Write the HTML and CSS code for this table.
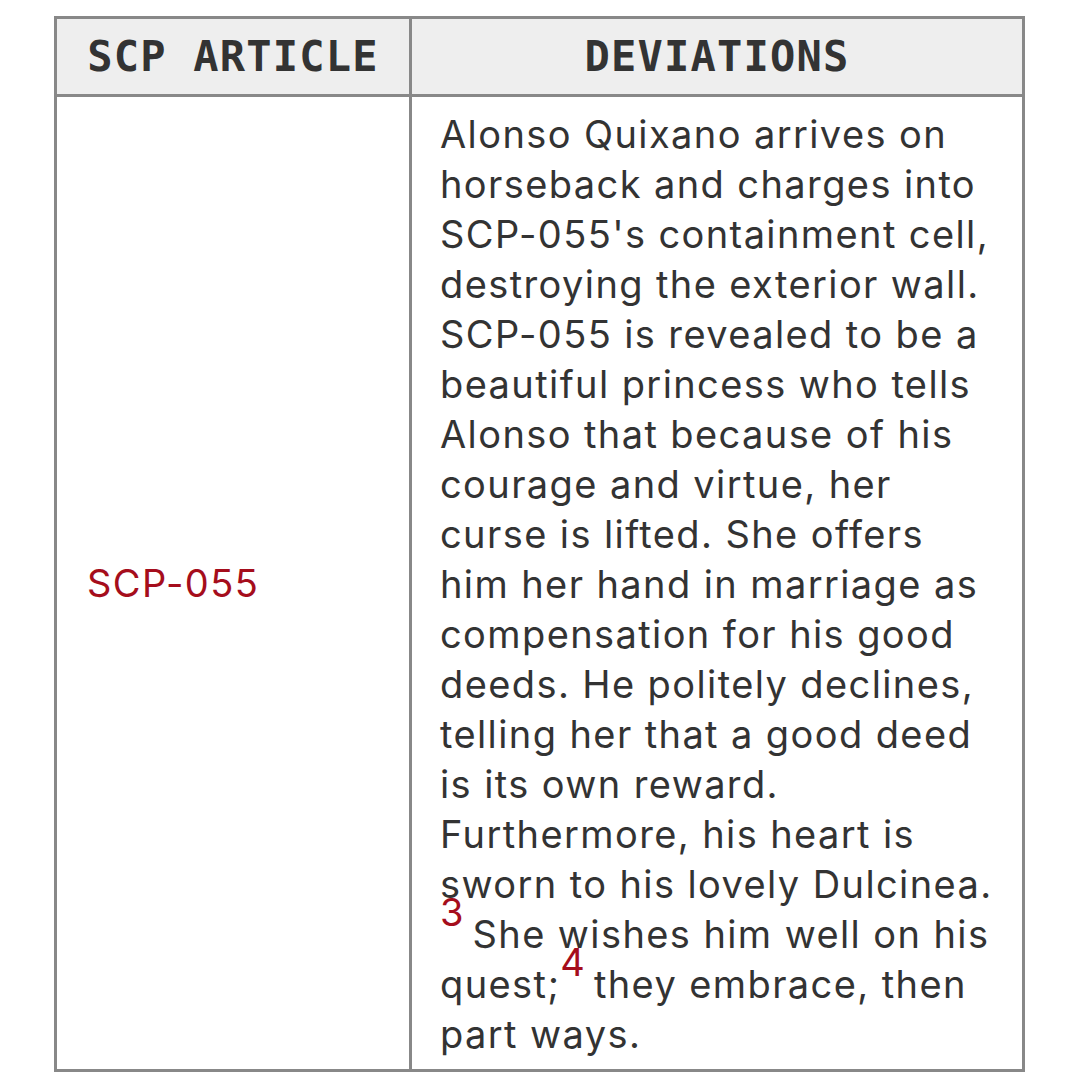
FILE: index.html
```html
<!DOCTYPE html>
<html>
<head>
<meta charset="utf-8">
<link rel="stylesheet" href="styles.css">
</head>
<body>
<table class="dev-table">
  <colgroup>
    <col class="col-article">
    <col class="col-dev">
  </colgroup>
  <thead>
    <tr>
      <th>SCP ARTICLE</th>
      <th>DEVIATIONS</th>
    </tr>
  </thead>
  <tbody>
    <tr>
      <td class="article"><a href="#" class="link">SCP-055</a></td>
      <td class="desc">Alonso Quixano arrives on<br>horseback and charges into<br>SCP-055's containment cell,<br>destroying the exterior wall.<br>SCP-055 is revealed to be a<br>beautiful princess who tells<br>Alonso that because of his<br>courage and virtue, her<br>curse is lifted. She offers<br>him her hand in marriage as<br>compensation for his good<br>deeds. He politely declines,<br>telling her that a good deed<br>is its own reward.<br>Furthermore, his heart is<br>sworn to his lovely Dulcinea.<br><sup class="fn">3</sup> She wishes him well on his<br>quest;<sup class="fn">4</sup> they embrace, then<br>part ways.</td>
    </tr>
  </tbody>
</table>
</body>
</html>
```

FILE: styles.css
```css
html, body {
  margin: 0;
  padding: 0;
  background: #ffffff;
}

body {
  padding: 16px 0 0 54px;
}

.dev-table {
  border-collapse: collapse;
  table-layout: fixed;
  width: 971px;
  color: #333333;
  font-family: "Inter", "Liberation Sans", sans-serif;
}

.col-article {
  width: 355px;
}

.dev-table th,
.dev-table td {
  border: 3px solid #888888;
}

.dev-table th {
  background: #eeeeee;
  font-family: "DejaVu Sans Mono", "Liberation Mono", monospace;
  font-weight: bold;
  font-size: 42px;
  letter-spacing: 1.2px;
  line-height: 55px;
  padding: 10px 20px;
  text-align: center;
  color: #333333;
}

.article {
  padding: 10px 30px;
  vertical-align: middle;
  font-size: 38px;
  letter-spacing: 1.4px;
  line-height: 50px;
}

.link {
  color: #a50d1c;
  text-decoration: none;
}

.desc {
  padding: 12px 10px 10px 28px;
  font-size: 38px;
  letter-spacing: 1.4px;
  line-height: 50px;
  white-space: nowrap;
  vertical-align: top;
}

.fn {
  color: #a50d1c;
  font-size: 1em;
  letter-spacing: 0;
  line-height: 0;
  vertical-align: 22px;
  margin-left: 0;
  margin-right: -3px;
}
```
